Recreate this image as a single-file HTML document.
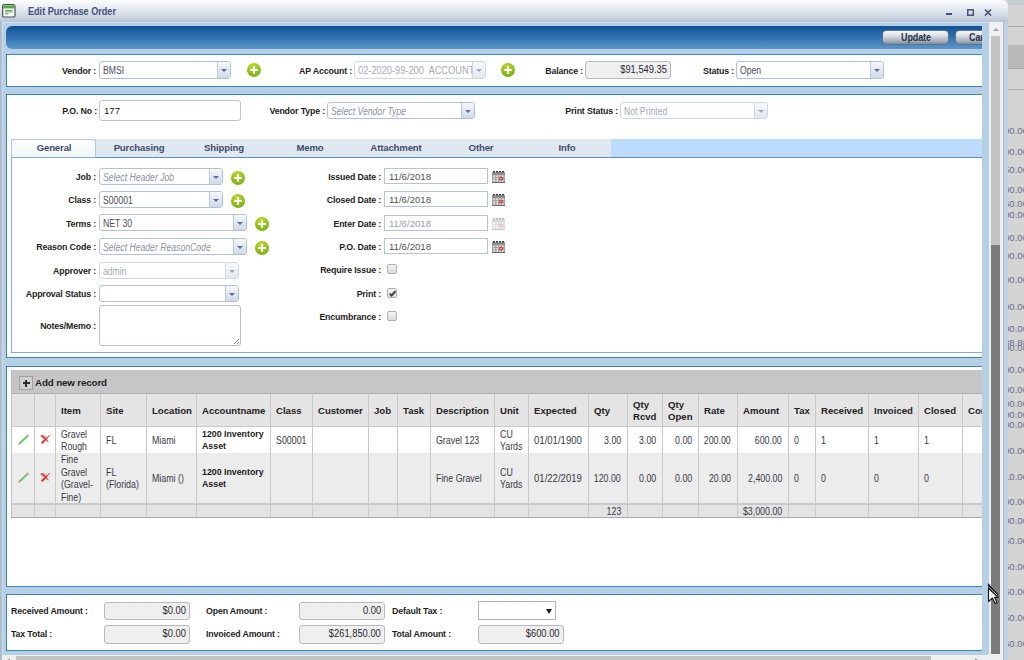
<!DOCTYPE html><html><head><meta charset="utf-8"><style>
*{box-sizing:border-box;margin:0;padding:0}
html,body{width:1024px;height:660px;overflow:hidden;background:#d3d3d3;font-family:'Liberation Sans',sans-serif}
.a{position:absolute}
.lbl{position:absolute;white-space:nowrap;font:bold 8.8px 'Liberation Sans',sans-serif;color:#1e1e1e;letter-spacing:-0.15px;line-height:12px}
.cb{position:absolute;background:#fff;border:1px solid #b1c1d7;border-radius:3px;overflow:hidden}
.cb .t{position:absolute;left:3px;top:1px;transform:scaleX(0.865);transform-origin:0 50%;font:10px 'Liberation Sans',sans-serif;color:#4a4d58;white-space:nowrap}
.cb.ph .t{font-style:italic;color:#8c93a3}
.cb.dis{border-color:#cdd7e5}
.cb.dis .t{color:#a4aab6}
.cb .dd{position:absolute;right:0;top:0;bottom:0;border-left:1px solid #b8c6da;background:linear-gradient(#f6f8fb,#cfd9e7)}
.cb.dis .dd{border-left-color:#d0d9e6;background:linear-gradient(#f8f9fb,#e2e8f0)}
.cb .dd i{position:absolute;left:50%;top:50%;margin-left:-3px;margin-top:-1px;border-left:3px solid transparent;border-right:3px solid transparent;border-top:3px solid #65699e}
.cb.dis .dd i{border-top-color:#a0a8c0}
.plus{position:absolute;width:14px;height:14px;border-radius:50%;background:radial-gradient(circle at 45% 25%,#c0dc2a 0%,#8fc21c 50%,#6ea614 100%)}
.plus:before{content:"";position:absolute;left:3.25px;top:5.8px;width:7.5px;height:2.4px;background:#fff}
.plus:after{content:"";position:absolute;left:5.8px;top:3.25px;width:2.4px;height:7.5px;background:#fff}
.rbox{position:absolute;background:#efefef;border:1px solid #b9b9b9;border-radius:3px;padding:0 3px 0 4px;font:10.4px 'Liberation Sans',sans-serif;color:#2a2a30;white-space:nowrap}
.rbox span{display:inline-block;transform:scaleX(0.9);transform-origin:100% 50%}
.panel{position:absolute;left:6px;width:990px;background:#fff;border:1px solid #3f83c3;border-right:none}
.tab{position:absolute;top:142px;height:19px;line-height:19px;letter-spacing:-0.15px;text-align:center;font:bold 9.6px 'Liberation Sans',sans-serif;color:#434d69}
.cal{position:absolute;width:13px;height:11px}
.chk{position:absolute;width:10px;height:10px;border:1px solid #b0b0b0;border-radius:2px;background:linear-gradient(#f4f4f4,#dcdcdc)}
.g{position:absolute;overflow:hidden}
.hc{position:absolute;font:bold 9.6px 'Liberation Sans',sans-serif;color:#222;line-height:12px}
.dc{position:absolute;font:10.4px 'Liberation Sans',sans-serif;color:#3a3a44;line-height:12.5px;transform:scaleX(0.85);transform-origin:0 0}
.dc.r{transform-origin:100% 0}
.dc b{font-size:8.8px;letter-spacing:0;color:#1c1c22;display:inline-block;transform:scaleX(1.176);transform-origin:0 0}
.bg0{position:absolute;left:1008px;font:9.6px 'Liberation Sans',sans-serif;color:#6c6c88;white-space:nowrap}
</style></head><body>
<div class="a" style="left:1008px;top:0;width:16px;height:660px;background:#d4d4d4"></div>
<div class="a" style="left:1008px;top:0;width:16px;height:5px;background:#c5cccc"></div>
<div class="a" style="left:1008px;top:26px;width:16px;height:1px;background:#a9a9a9"></div>
<div class="a" style="left:1008px;top:68px;width:16px;height:1px;background:#a9a9a9"></div>
<div class="a" style="left:1008px;top:89px;width:16px;height:1px;background:#a9a9a9"></div>
<div class="a" style="left:1008px;top:45px;width:16px;height:23px;background:#b9b9b9"></div>
<div class="bg0" style="top:125px;left:1004px">00.00</div>
<div class="bg0" style="top:146px;left:1004px">00.00</div>
<div class="bg0" style="top:164px;left:1004px">50.00</div>
<div class="bg0" style="top:184px;left:1004px">00.00</div>
<div class="bg0" style="top:198px;left:1004px">50.00</div>
<div class="bg0" style="top:209px;left:1004px">00.00</div>
<div class="bg0" style="top:232px;left:1004px">00.00</div>
<div class="bg0" style="top:250px;left:1004px">00.00</div>
<div class="bg0" style="top:274px;left:1004px">00.00</div>
<div class="bg0" style="top:301px;left:1004px">00.00</div>
<div class="bg0" style="top:323px;left:1004px">00.00</div>
<div class="bg0" style="top:337px;left:1004px">38.88</div>
<div class="bg0" style="top:342px;left:1004px">00.00</div>
<div class="bg0" style="top:364px;left:1004px">00.00</div>
<div class="bg0" style="top:384px;left:1004px">00.00</div>
<div class="bg0" style="top:398px;left:1004px">00.00</div>
<div class="bg0" style="top:409px;left:1004px">00.00</div>
<div class="bg0" style="top:419px;left:1004px">00.00</div>
<div class="bg0" style="top:445px;left:1004px">00.00</div>
<div class="bg0" style="top:471px;left:1004px">10.00</div>
<div class="bg0" style="top:496px;left:1004px">00.00</div>
<div class="bg0" style="top:515px;left:1004px">00.00</div>
<div class="bg0" style="top:535px;left:1004px">50.00</div>
<div class="bg0" style="top:561px;left:1004px">50.00</div>
<div class="bg0" style="top:586px;left:1004px">50.00</div>
<div class="bg0" style="top:612px;left:1004px">50.00</div>
<div class="bg0" style="top:638px;left:1004px">50.00</div>
<div class="a" style="left:0;top:0;width:1008px;height:660px;background:#c3d0e0;border-radius:0 6px 0 0"></div>
<div class="a" style="left:0;top:0;width:1008px;height:22px;background:linear-gradient(#fdfdfe,#e6eaf1 40%,#cdd5e2 75%,#b9c5d6);border-radius:0 6px 0 0"></div>
<div class="a" style="left:1003px;top:22px;width:1px;height:638px;background:#a9bad2"></div>
<div class="a" style="left:0;top:22px;width:2px;height:638px;background:linear-gradient(90deg,#a8b6cc,#b6c2d4)"></div>
<svg class="a" style="left:2px;top:4px" width="14" height="14" viewBox="0 0 14 14">
<rect x="0.6" y="0.6" width="12.4" height="12.4" rx="1.6" fill="#f6f8f4" stroke="#505050" stroke-width="1.2"/>
<rect x="1.2" y="1.2" width="11.2" height="3.2" fill="#4fab47"/>
<rect x="1.2" y="1.2" width="11.2" height="0.9" fill="#86cf76"/>
<rect x="3" y="6.2" width="7.5" height="2.4" fill="#a6c8a6"/><rect x="3" y="6.2" width="7.5" height="1" fill="#5f9a5f"/><rect x="3" y="9.3" width="3.5" height="1.1" fill="#5f9a5f"/>
</svg>
<div class="a" style="left:28px;top:6px;font:bold 10.4px 'Liberation Sans',sans-serif;color:#43507a;white-space:nowrap;transform:scaleX(0.875);transform-origin:0 0">Edit Purchase Order</div>
<div class="a" style="left:946px;top:13px;width:6px;height:2px;background:#46507a"></div>
<svg class="a" style="left:967px;top:9px" width="7" height="7" viewBox="0 0 7 7"><rect x="0.75" y="0.75" width="5.5" height="5.5" fill="none" stroke="#46507a" stroke-width="1.5"/></svg>
<svg class="a" style="left:984px;top:9px" width="8" height="7" viewBox="0 0 8 7"><path d="M1 0.5 L7 6.5 M7 0.5 L1 6.5" stroke="#46507a" stroke-width="1.6"/></svg>
<div class="a" style="left:2px;top:22px;width:987px;height:638px;background:#b5d0e5"></div>
<div class="a" style="left:2px;top:22px;width:1px;height:638px;background:#cddbe9"></div>
<div class="a" style="left:2px;top:22px;width:987px;height:1px;background:#d3e1ec"></div>
<div class="a" style="left:6px;top:26px;width:976px;height:23px;background:linear-gradient(#0e5295,#2f6fae 45%,#5a97cb);border-radius:6px 0 0 6px"></div>
<div class="a" style="left:882px;top:30px;width:67px;height:15px;border-radius:4px;background:linear-gradient(#f4f5f6,#e2e5e8 30%,#a9b3be 75%,#7d8b9b);border:1px solid #5f7390;font:bold 10.2px 'Liberation Sans',sans-serif;color:#27304a;text-align:center;line-height:14px;letter-spacing:-0.1px"><span style="display:inline-block;transform:scaleX(0.88)">Update</span></div>
<div class="a" style="left:955px;top:30px;width:27px;height:15px;overflow:hidden"><div style="position:absolute;left:0;top:0;width:67px;height:15px;border-radius:4px;background:linear-gradient(#f4f5f6,#e2e5e8 30%,#a9b3be 75%,#7d8b9b);border:1px solid #5f7390;font:bold 10.2px 'Liberation Sans',sans-serif;color:#27304a;text-align:left;padding-left:13px;line-height:14px;letter-spacing:-0.1px"><span style="display:inline-block;transform:scaleX(0.88);transform-origin:0 0">Cancel</span></div></div>
<div class="a" style="left:989px;top:22px;width:14px;height:638px;background:#f0f0f0"></div>
<div class="a" style="left:991px;top:36px;width:9px;height:618px;background:#c3c3c3"></div>
<div class="a" style="left:991px;top:245px;width:9px;height:409px;background:#7b7b7b"></div>
<div class="a" style="left:993px;top:28px;width:0;height:0;border-left:3px solid transparent;border-right:3px solid transparent;border-bottom:3px solid #a3a3a3"></div>
<div class="panel" style="top:54px;height:33px;width:976px"></div>
<div class="panel" style="top:94px;height:264px;width:976px"></div>
<div class="panel" style="top:366px;height:221px;width:976px"></div>
<div class="panel" style="top:594px;height:57px;width:976px"></div>
<div class="lbl" style="right:928px;top:65px;">Vendor :</div>
<div class="cb" style="left:99px;top:61px;width:132px;height:18px;"><span class="t" style="line-height:16px">BMSI</span><div class="dd" style="width:13px"><i></i></div></div>
<div class="plus" style="left:247px;top:63px"></div>
<div class="lbl" style="right:672px;top:65px;">AP Account :</div>
<div class="cb dis" style="left:354px;top:61px;width:132px;height:18px;"><span class="t" style="line-height:16px"><span style='display:inline-block;transform:scaleX(1.07);transform-origin:0 0'>02-2020-99-200&nbsp; ACCOUNTS PAYABLE</span></span><div class="dd" style="width:13px"><i></i></div></div>
<div class="plus" style="left:501px;top:63px"></div>
<div class="lbl" style="right:441px;top:65px;">Balance :</div>
<div class="rbox" style="left:585px;top:61px;width:86px;height:18px;line-height:15px;text-align:right"><span>$91,549.35</span></div>
<div class="lbl" style="right:290px;top:65px;">Status :</div>
<div class="cb" style="left:736px;top:61px;width:148px;height:18px;"><span class="t" style="line-height:16px">Open</span><div class="dd" style="width:13px"><i></i></div></div>
<div class="lbl" style="right:927px;top:105px;">P.O. No :</div>
<div class="a" style="left:99px;top:100px;width:142px;height:21px;border:1px solid #c3c3c3;border-radius:3px;background:#fff;font:9.6px 'Liberation Sans',sans-serif;color:#222;line-height:19px;padding-left:4px">177</div>
<div class="lbl" style="right:699px;top:105px;">Vendor Type :</div>
<div class="cb ph" style="left:327px;top:102px;width:148px;height:17px;"><span class="t" style="line-height:15px">Select Vendor Type</span><div class="dd" style="width:13px"><i></i></div></div>
<div class="lbl" style="right:406px;top:105px;">Print Status :</div>
<div class="cb dis" style="left:620px;top:102px;width:148px;height:17px;"><span class="t" style="line-height:15px">Not Printed</span><div class="dd" style="width:13px"><i></i></div></div>
<div class="a" style="left:11px;top:139px;width:971px;height:19px;background:#bddbfa"></div>
<div class="a" style="left:11px;top:139px;width:600px;height:19px;background:#dfe7f1"></div>
<div class="a" style="left:11px;top:139px;width:85px;height:19px;background:linear-gradient(#fdfeff,#f1f6fb);border:1px solid #b7c9de;border-bottom:none;border-radius:3px 3px 0 0"></div>
<div class="a" style="left:11px;top:157px;width:971px;height:196px;border:1px solid #80acd8;border-right:none;background:#fff"></div>
<div class="a" style="left:96px;top:157px;width:886px;height:1px;background:#5a90c8"></div>
<div class="tab" style="left:11px;width:86px">General</div>
<div class="tab" style="left:96px;width:86px">Purchasing</div>
<div class="tab" style="left:181px;width:86px">Shipping</div>
<div class="tab" style="left:267px;width:86px">Memo</div>
<div class="tab" style="left:353px;width:86px">Attachment</div>
<div class="tab" style="left:438px;width:86px">Other</div>
<div class="tab" style="left:524px;width:86px">Info</div>
<div class="lbl" style="right:928px;top:171px;">Job :</div>
<div class="cb ph" style="left:99px;top:168px;width:124px;height:17px;"><span class="t" style="line-height:15px">Select Header Job</span><div class="dd" style="width:13px"><i></i></div></div>
<div class="plus" style="left:231px;top:171px"></div>
<div class="lbl" style="right:928px;top:194px;">Class :</div>
<div class="cb" style="left:99px;top:191px;width:124px;height:17px;"><span class="t" style="line-height:15px">S00001</span><div class="dd" style="width:13px"><i></i></div></div>
<div class="plus" style="left:231px;top:194px"></div>
<div class="lbl" style="right:928px;top:218px;">Terms :</div>
<div class="cb" style="left:99px;top:214px;width:148px;height:17px;"><span class="t" style="line-height:15px">NET 30</span><div class="dd" style="width:13px"><i></i></div></div>
<div class="plus" style="left:255px;top:217px"></div>
<div class="lbl" style="right:928px;top:241px;">Reason Code :</div>
<div class="cb ph" style="left:99px;top:238px;width:148px;height:17px;"><span class="t" style="line-height:15px">Select Header ReasonCode</span><div class="dd" style="width:13px"><i></i></div></div>
<div class="plus" style="left:255px;top:241px"></div>
<div class="lbl" style="right:928px;top:265px;">Approver :</div>
<div class="cb dis" style="left:99px;top:262px;width:140px;height:17px;"><span class="t" style="line-height:15px">admin</span><div class="dd" style="width:13px"><i></i></div></div>
<div class="lbl" style="right:928px;top:288px;">Approval Status :</div>
<div class="cb" style="left:99px;top:285px;width:140px;height:17px;"><span class="t" style="line-height:15px"></span><div class="dd" style="width:13px"><i></i></div></div>
<div class="lbl" style="right:928px;top:320px;">Notes/Memo :</div>
<div class="a" style="left:99px;top:305px;width:142px;height:41px;border:1px solid #bcbcbc;border-radius:3px;background:#fff"></div>
<svg class="a" style="left:233px;top:338px" width="7" height="7"><path d="M6 1 L1 6 M6 4 L4 6" stroke="#888" stroke-width="1"/></svg>
<div class="lbl" style="right:643px;top:171px;">Issued Date :</div>
<div class="a" style="left:384px;top:168px;width:104px;height:16px;border:1px solid #b5c4da;background:#fff;font:9.6px 'Liberation Sans',sans-serif;color:#555;line-height:15px;padding-left:4px">11/6/2018</div>
<svg class="a" style="left:492px;top:171px;opacity:1" width="13" height="12" viewBox="0 0 13 12">
<rect x="0" y="1" width="13" height="11" fill="#a4a4a4"/>
<rect x="0" y="2" width="13" height="1.5" fill="#858585"/>
<g fill="#3c3c3c"><rect x="1" y="0" width="2" height="1.5"/><rect x="4" y="0" width="2" height="1.5"/><rect x="7" y="0" width="2" height="1.5"/><rect x="10" y="0" width="2" height="1.5"/></g>
<g fill="#eeeeee"><rect x="1.5" y="4.5" width="1.5" height="1.5"/><rect x="4.5" y="4.5" width="1.5" height="1.5"/><rect x="7.5" y="4.5" width="1.5" height="1.5"/><rect x="10" y="4.5" width="1.5" height="1.5"/>
<rect x="1.5" y="7" width="1.5" height="1.5"/><rect x="4.5" y="7" width="1.5" height="1.5"/><rect x="1.5" y="9.2" width="1.5" height="1.5"/><rect x="4.5" y="9.2" width="1.5" height="1.5"/><rect x="7.5" y="9.2" width="1.5" height="1.5"/><rect x="10" y="9.2" width="1.5" height="1.5"/></g>
<rect x="0" y="11" width="13" height="1" fill="#6a6a6a"/>
<circle cx="9" cy="7.5" r="1.9" fill="#e03030"/><circle cx="9" cy="7.5" r="0.7" fill="#fff"/>
</svg>
<div class="lbl" style="right:643px;top:194px;">Closed Date :</div>
<div class="a" style="left:384px;top:191px;width:104px;height:16px;border:1px solid #b5c4da;background:#fff;font:9.6px 'Liberation Sans',sans-serif;color:#555;line-height:15px;padding-left:4px">11/6/2018</div>
<svg class="a" style="left:492px;top:194px;opacity:1" width="13" height="12" viewBox="0 0 13 12">
<rect x="0" y="1" width="13" height="11" fill="#a4a4a4"/>
<rect x="0" y="2" width="13" height="1.5" fill="#858585"/>
<g fill="#3c3c3c"><rect x="1" y="0" width="2" height="1.5"/><rect x="4" y="0" width="2" height="1.5"/><rect x="7" y="0" width="2" height="1.5"/><rect x="10" y="0" width="2" height="1.5"/></g>
<g fill="#eeeeee"><rect x="1.5" y="4.5" width="1.5" height="1.5"/><rect x="4.5" y="4.5" width="1.5" height="1.5"/><rect x="7.5" y="4.5" width="1.5" height="1.5"/><rect x="10" y="4.5" width="1.5" height="1.5"/>
<rect x="1.5" y="7" width="1.5" height="1.5"/><rect x="4.5" y="7" width="1.5" height="1.5"/><rect x="1.5" y="9.2" width="1.5" height="1.5"/><rect x="4.5" y="9.2" width="1.5" height="1.5"/><rect x="7.5" y="9.2" width="1.5" height="1.5"/><rect x="10" y="9.2" width="1.5" height="1.5"/></g>
<rect x="0" y="11" width="13" height="1" fill="#6a6a6a"/>
<circle cx="9" cy="7.5" r="1.9" fill="#e03030"/><circle cx="9" cy="7.5" r="0.7" fill="#fff"/>
</svg>
<div class="lbl" style="right:643px;top:218px;">Enter Date :</div>
<div class="a" style="left:384px;top:215px;width:104px;height:16px;border:1px solid #b5c4da;background:#fff;font:9.6px 'Liberation Sans',sans-serif;color:#9aa0ad;line-height:15px;padding-left:4px">11/6/2018</div>
<svg class="a" style="left:492px;top:218px;opacity:0.35" width="13" height="12" viewBox="0 0 13 12">
<rect x="0" y="1" width="13" height="11" fill="#a4a4a4"/>
<rect x="0" y="2" width="13" height="1.5" fill="#858585"/>
<g fill="#3c3c3c"><rect x="1" y="0" width="2" height="1.5"/><rect x="4" y="0" width="2" height="1.5"/><rect x="7" y="0" width="2" height="1.5"/><rect x="10" y="0" width="2" height="1.5"/></g>
<g fill="#eeeeee"><rect x="1.5" y="4.5" width="1.5" height="1.5"/><rect x="4.5" y="4.5" width="1.5" height="1.5"/><rect x="7.5" y="4.5" width="1.5" height="1.5"/><rect x="10" y="4.5" width="1.5" height="1.5"/>
<rect x="1.5" y="7" width="1.5" height="1.5"/><rect x="4.5" y="7" width="1.5" height="1.5"/><rect x="1.5" y="9.2" width="1.5" height="1.5"/><rect x="4.5" y="9.2" width="1.5" height="1.5"/><rect x="7.5" y="9.2" width="1.5" height="1.5"/><rect x="10" y="9.2" width="1.5" height="1.5"/></g>
<rect x="0" y="11" width="13" height="1" fill="#6a6a6a"/>
<circle cx="9" cy="7.5" r="1.9" fill="#e03030"/><circle cx="9" cy="7.5" r="0.7" fill="#fff"/>
</svg>
<div class="lbl" style="right:643px;top:241px;">P.O. Date :</div>
<div class="a" style="left:384px;top:238px;width:104px;height:16px;border:1px solid #b5c4da;background:#fff;font:9.6px 'Liberation Sans',sans-serif;color:#555;line-height:15px;padding-left:4px">11/6/2018</div>
<svg class="a" style="left:492px;top:241px;opacity:1" width="13" height="12" viewBox="0 0 13 12">
<rect x="0" y="1" width="13" height="11" fill="#a4a4a4"/>
<rect x="0" y="2" width="13" height="1.5" fill="#858585"/>
<g fill="#3c3c3c"><rect x="1" y="0" width="2" height="1.5"/><rect x="4" y="0" width="2" height="1.5"/><rect x="7" y="0" width="2" height="1.5"/><rect x="10" y="0" width="2" height="1.5"/></g>
<g fill="#eeeeee"><rect x="1.5" y="4.5" width="1.5" height="1.5"/><rect x="4.5" y="4.5" width="1.5" height="1.5"/><rect x="7.5" y="4.5" width="1.5" height="1.5"/><rect x="10" y="4.5" width="1.5" height="1.5"/>
<rect x="1.5" y="7" width="1.5" height="1.5"/><rect x="4.5" y="7" width="1.5" height="1.5"/><rect x="1.5" y="9.2" width="1.5" height="1.5"/><rect x="4.5" y="9.2" width="1.5" height="1.5"/><rect x="7.5" y="9.2" width="1.5" height="1.5"/><rect x="10" y="9.2" width="1.5" height="1.5"/></g>
<rect x="0" y="11" width="13" height="1" fill="#6a6a6a"/>
<circle cx="9" cy="7.5" r="1.9" fill="#e03030"/><circle cx="9" cy="7.5" r="0.7" fill="#fff"/>
</svg>
<div class="lbl" style="right:643px;top:264px;">Require Issue :</div>
<div class="chk" style="left:387px;top:264px"></div>
<div class="lbl" style="right:643px;top:288px;">Print :</div>
<div class="chk" style="left:387px;top:288px"></div>
<svg class="a" style="left:388px;top:289px" width="9" height="9"><path d="M1.8 4.6 L3.6 6.6 L7.4 2.2" stroke="#3a3a3a" stroke-width="1.9" fill="none"/></svg>
<div class="lbl" style="right:643px;top:311px;">Encumbrance :</div>
<div class="chk" style="left:387px;top:311px"></div>
<div class="a" style="left:11px;top:370px;width:971px;height:149px;overflow:hidden">
<div class="a" style="left:0;top:0;width:1000px;height:24px;background:#c6c6c6;border-bottom:1px solid #aeaeae;border-left:1px solid #bdbdbd"></div>
<div class="a" style="left:8px;top:5.5px;width:14px;height:14px;border:1px solid #a0a0a0;background:#d0d0d0"></div>
<div class="a" style="left:11.5px;top:12.2px;width:7px;height:1.6px;background:#2a2a2a"></div><div class="a" style="left:14.2px;top:9.5px;width:1.6px;height:7px;background:#2a2a2a"></div>
<div class="a" style="left:24px;top:6.5px;font:bold 9.8px 'Liberation Sans',sans-serif;color:#222;white-space:nowrap;letter-spacing:-0.15px">Add new record</div>
<div class="a" style="left:0;top:24px;width:1000px;height:33px;background:#e4e4e4;border-bottom:1px solid #c9c9c9"></div>
<div class="a" style="left:0;top:57px;width:1000px;height:26px;background:#fff"></div>
<div class="a" style="left:0;top:83px;width:1000px;height:50px;background:#ececec"></div>
<div class="a" style="left:0;top:133px;width:1000px;height:2px;background:#c9c9c9"></div>
<div class="a" style="left:0;top:135px;width:1000px;height:13px;background:#e3e3e3;border-bottom:1px solid #a9a9a9"></div>
<div class="a" style="left:0;top:24px;width:1px;height:123px;background:#c0c0c0"></div>
<div class="a" style="left:23px;top:24px;width:1px;height:123px;background:#c9c9c9"></div>
<div class="a" style="left:44px;top:24px;width:1px;height:123px;background:#c9c9c9"></div>
<div class="a" style="left:89px;top:24px;width:1px;height:123px;background:#c9c9c9"></div>
<div class="a" style="left:135px;top:24px;width:1px;height:123px;background:#c9c9c9"></div>
<div class="a" style="left:185px;top:24px;width:1px;height:123px;background:#c9c9c9"></div>
<div class="a" style="left:259px;top:24px;width:1px;height:123px;background:#c9c9c9"></div>
<div class="a" style="left:301px;top:24px;width:1px;height:123px;background:#c9c9c9"></div>
<div class="a" style="left:357px;top:24px;width:1px;height:123px;background:#c9c9c9"></div>
<div class="a" style="left:386px;top:24px;width:1px;height:123px;background:#c9c9c9"></div>
<div class="a" style="left:419px;top:24px;width:1px;height:123px;background:#c9c9c9"></div>
<div class="a" style="left:483px;top:24px;width:1px;height:123px;background:#c9c9c9"></div>
<div class="a" style="left:517px;top:24px;width:1px;height:123px;background:#c9c9c9"></div>
<div class="a" style="left:577px;top:24px;width:1px;height:123px;background:#c9c9c9"></div>
<div class="a" style="left:616px;top:24px;width:1px;height:123px;background:#c9c9c9"></div>
<div class="a" style="left:651px;top:24px;width:1px;height:123px;background:#c9c9c9"></div>
<div class="a" style="left:687px;top:24px;width:1px;height:123px;background:#c9c9c9"></div>
<div class="a" style="left:726px;top:24px;width:1px;height:123px;background:#c9c9c9"></div>
<div class="a" style="left:777px;top:24px;width:1px;height:123px;background:#c9c9c9"></div>
<div class="a" style="left:804px;top:24px;width:1px;height:123px;background:#c9c9c9"></div>
<div class="a" style="left:857px;top:24px;width:1px;height:123px;background:#c9c9c9"></div>
<div class="a" style="left:907px;top:24px;width:1px;height:123px;background:#c9c9c9"></div>
<div class="a" style="left:951px;top:24px;width:1px;height:123px;background:#c9c9c9"></div>
<div class="hc" style="left:50px;top:35px;white-space:nowrap">Item</div>
<div class="hc" style="left:95px;top:35px;white-space:nowrap">Site</div>
<div class="hc" style="left:141px;top:35px;white-space:nowrap">Location</div>
<div class="hc" style="left:191px;top:35px;white-space:nowrap">Accountname</div>
<div class="hc" style="left:265px;top:35px;white-space:nowrap">Class</div>
<div class="hc" style="left:307px;top:35px;white-space:nowrap">Customer</div>
<div class="hc" style="left:363px;top:35px;white-space:nowrap">Job</div>
<div class="hc" style="left:392px;top:35px;white-space:nowrap">Task</div>
<div class="hc" style="left:425px;top:35px;white-space:nowrap">Description</div>
<div class="hc" style="left:489px;top:35px;white-space:nowrap">Unit</div>
<div class="hc" style="left:523px;top:35px;white-space:nowrap">Expected</div>
<div class="hc" style="left:583px;top:35px;white-space:nowrap">Qty</div>
<div class="hc" style="left:622px;top:29px;white-space:nowrap">Qty<br>Rcvd</div>
<div class="hc" style="left:657px;top:29px;white-space:nowrap">Qty<br>Open</div>
<div class="hc" style="left:693px;top:35px;white-space:nowrap">Rate</div>
<div class="hc" style="left:732px;top:35px;white-space:nowrap">Amount</div>
<div class="hc" style="left:783px;top:35px;white-space:nowrap">Tax</div>
<div class="hc" style="left:810px;top:35px;white-space:nowrap">Received</div>
<div class="hc" style="left:863px;top:35px;white-space:nowrap">Invoiced</div>
<div class="hc" style="left:913px;top:35px;white-space:nowrap">Closed</div>
<div class="hc" style="left:957px;top:35px;white-space:nowrap">Comments</div>
<div class="dc" style="left:50px;top:58.5px;white-space:nowrap;">Gravel<br>Rough</div>
<div class="dc" style="left:95px;top:64.75px;white-space:nowrap;">FL</div>
<div class="dc" style="left:141px;top:64.75px;white-space:nowrap;">Miami</div>
<div class="dc" style="left:191px;top:57.5px;white-space:nowrap;"><b>1200 Inventory<br>Asset</b></div>
<div class="dc" style="left:265px;top:64.75px;white-space:nowrap;">S00001</div>
<div class="dc" style="left:425px;top:64.75px;white-space:nowrap;">Gravel 123</div>
<div class="dc" style="left:489px;top:58.5px;white-space:nowrap;">CU<br>Yards</div>
<div class="dc" style="left:523px;top:64.75px;white-space:nowrap;transform:scaleX(0.92);">01/01/1900</div>
<div class="dc r" style="right:361px;top:64.75px;white-space:nowrap;text-align:right">3.00</div>
<div class="dc r" style="right:326px;top:64.75px;white-space:nowrap;text-align:right">3.00</div>
<div class="dc r" style="right:290px;top:64.75px;white-space:nowrap;text-align:right">0.00</div>
<div class="dc r" style="right:251px;top:64.75px;white-space:nowrap;text-align:right">200.00</div>
<div class="dc r" style="right:200px;top:64.75px;white-space:nowrap;text-align:right">600.00</div>
<div class="dc" style="left:783px;top:64.75px;white-space:nowrap;">0</div>
<div class="dc" style="left:810px;top:64.75px;white-space:nowrap;">1</div>
<div class="dc" style="left:863px;top:64.75px;white-space:nowrap;">1</div>
<div class="dc" style="left:913px;top:64.75px;white-space:nowrap;">1</div>
<div class="dc" style="left:50px;top:84.0px;white-space:nowrap;">Fine<br>Gravel<br>(Gravel-<br>Fine)</div>
<div class="dc" style="left:95px;top:96.5px;white-space:nowrap;">FL<br>(Florida)</div>
<div class="dc" style="left:141px;top:102.75px;white-space:nowrap;">Miami ()</div>
<div class="dc" style="left:191px;top:95.5px;white-space:nowrap;"><b>1200 Inventory<br>Asset</b></div>
<div class="dc" style="left:425px;top:102.75px;white-space:nowrap;">Fine Gravel</div>
<div class="dc" style="left:489px;top:96.5px;white-space:nowrap;">CU<br>Yards</div>
<div class="dc" style="left:523px;top:102.75px;white-space:nowrap;transform:scaleX(0.92);">01/22/2019</div>
<div class="dc r" style="right:361px;top:102.75px;white-space:nowrap;text-align:right">120.00</div>
<div class="dc r" style="right:326px;top:102.75px;white-space:nowrap;text-align:right">0.00</div>
<div class="dc r" style="right:290px;top:102.75px;white-space:nowrap;text-align:right">0.00</div>
<div class="dc r" style="right:251px;top:102.75px;white-space:nowrap;text-align:right">20.00</div>
<div class="dc r" style="right:200px;top:102.75px;white-space:nowrap;text-align:right">2,400.00</div>
<div class="dc" style="left:783px;top:102.75px;white-space:nowrap;">0</div>
<div class="dc" style="left:810px;top:102.75px;white-space:nowrap;">0</div>
<div class="dc" style="left:863px;top:102.75px;white-space:nowrap;">0</div>
<div class="dc" style="left:913px;top:102.75px;white-space:nowrap;">0</div>
<div class="dc r" style="right:361px;top:136px">123</div>
<div class="dc r" style="right:200px;top:136px">$3,000.00</div>
<svg class="a" style="left:6px;top:63px" width="13" height="13" viewBox="0 0 13 13"><path d="M2.2 10.8 L10.8 2.7" stroke="#6fc36f" stroke-width="1.9" stroke-linecap="butt"/><path d="M10 3.5 L11.5 2" stroke="#d98" stroke-width="2"/><path d="M1.5 11.5 L2.8 10.2" stroke="#c9a070" stroke-width="1.6"/></svg>
<svg class="a" style="left:25px;top:60px" width="18" height="18" viewBox="0 0 18 18"><polygon points="13.9,5.4 13.4,4.9 5.0,12.6 6.4,14.0" fill="#ee2020"/><polygon points="4.4,6.2 5.4,4.9 8.2,5.4 12.8,12.0 12.3,12.5" fill="#f03030" fill-opacity="0.85"/></svg>
<svg class="a" style="left:6px;top:101px" width="13" height="13" viewBox="0 0 13 13"><path d="M2.2 10.8 L10.8 2.7" stroke="#6fc36f" stroke-width="1.9" stroke-linecap="butt"/><path d="M10 3.5 L11.5 2" stroke="#d98" stroke-width="2"/><path d="M1.5 11.5 L2.8 10.2" stroke="#c9a070" stroke-width="1.6"/></svg>
<svg class="a" style="left:25px;top:98px" width="18" height="18" viewBox="0 0 18 18"><polygon points="13.9,5.4 13.4,4.9 5.0,12.6 6.4,14.0" fill="#ee2020"/><polygon points="4.4,6.2 5.4,4.9 8.2,5.4 12.8,12.0 12.3,12.5" fill="#f03030" fill-opacity="0.85"/></svg>
</div>
<div class="lbl" style="left:11px;top:605px;">Received Amount :</div>
<div class="rbox" style="left:104px;top:602px;width:86px;height:18px;line-height:15px;text-align:right"><span>$0.00</span></div>
<div class="lbl" style="left:206px;top:605px;">Open Amount :</div>
<div class="rbox" style="left:299px;top:602px;width:86px;height:18px;line-height:15px;text-align:right"><span>0.00</span></div>
<div class="lbl" style="left:392px;top:605px;">Default Tax :</div>
<div class="a" style="left:478px;top:601px;width:78px;height:19px;border:1px solid #b3b3b3;background:#fff"></div>
<div class="a" style="left:545.5px;top:608.5px;width:0;height:0;border-left:3px solid transparent;border-right:3px solid transparent;border-top:5px solid #1a1a1a"></div>
<div class="lbl" style="left:11px;top:628px;">Tax Total :</div>
<div class="rbox" style="left:104px;top:625px;width:86px;height:19px;line-height:16px;text-align:right"><span>$0.00</span></div>
<div class="lbl" style="left:206px;top:628px;">Invoiced Amount :</div>
<div class="rbox" style="left:299px;top:625px;width:86px;height:19px;line-height:16px;text-align:right"><span>$261,850.00</span></div>
<div class="lbl" style="left:392px;top:628px;">Total Amount :</div>
<div class="rbox" style="left:478px;top:625px;width:86px;height:19px;line-height:16px;text-align:right"><span>$600.00</span></div>
<div class="a" style="left:2px;top:655px;width:987px;height:5px;background:#f0f0f0"></div>
<div class="a" style="left:16px;top:656px;width:915px;height:4px;background:#c3c3c3"></div>
<div class="a" style="left:7px;top:658px;width:0;height:0;border-top:2.5px solid transparent;border-bottom:2.5px solid transparent;border-right:3px solid #a3a3a3"></div>
<div class="a" style="left:975px;top:658px;width:0;height:0;border-top:2.5px solid transparent;border-bottom:2.5px solid transparent;border-left:3px solid #a3a3a3"></div>
<svg class="a" style="left:987px;top:583px" width="13" height="22" viewBox="0 0 13 22"><path d="M1.5 1 L1.5 18.5 L5.5 15 L8 20.5 L10 19.5 L7.6 14.2 L11 14.2 Z" fill="#fff" stroke="#111" stroke-width="1.1" stroke-linejoin="round"/><polygon points="1,1 11,10.8 11,15 1,5.8" fill="#151515"/><path d="M1.4 3.6 L10.6 12.6" stroke="#cfd6e6" stroke-width="0.9"/></svg>
</body></html>
